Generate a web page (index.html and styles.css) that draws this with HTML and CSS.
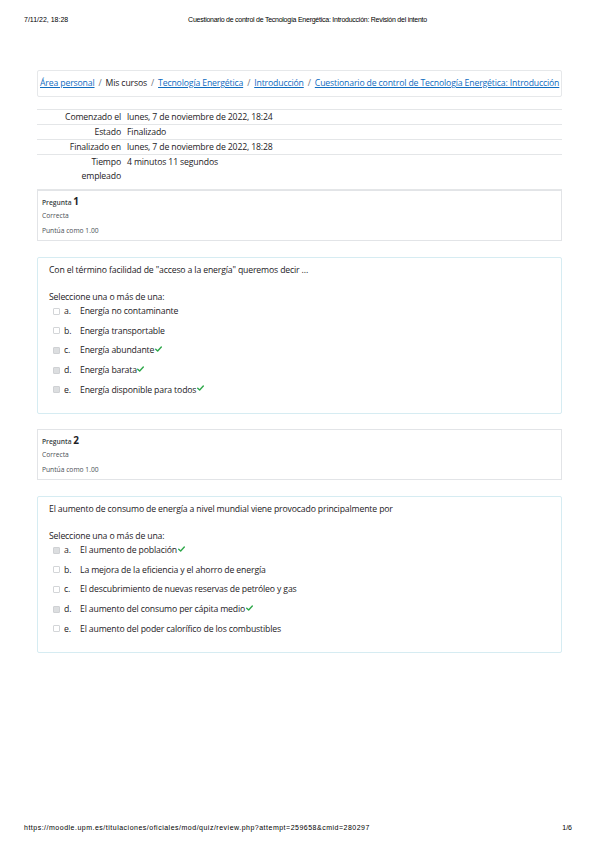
FILE: index.html
```html
<!DOCTYPE html>
<html lang="es">
<head>
<meta charset="utf-8">
<title>Revisión del intento</title>
<link rel="stylesheet" href="styles.css">
</head>
<body>
<header class="print-head">
  <span class="ph-date">7/11/22, 18:28</span>
  <span class="ph-title">Cuestionario de control de Tecnología Energética: Introducción: Revisión del intento</span>
  <span></span>
</header>

<main class="page">
  <nav class="crumbs">
    <a href="#">Área personal</a><span class="sep">/</span><span class="plain">Mis cursos</span><span class="sep">/</span><a href="#">Tecnología Energética</a><span class="sep">/</span><a href="#">Introducción</a><span class="sep">/</span><a href="#">Cuestionario de control de Tecnología Energética: Introducción</a>
  </nav>

  <table class="summary">
    <tr><th>Comenzado el</th><td>lunes, 7 de noviembre de 2022, 18:24</td></tr>
    <tr><th>Estado</th><td>Finalizado</td></tr>
    <tr><th>Finalizado en</th><td>lunes, 7 de noviembre de 2022, 18:28</td></tr>
    <tr class="last"><th>Tiempo<br>empleado</th><td>4 minutos 11 segundos</td></tr>
  </table>

  <section class="qinfo">
    <div class="qno">Pregunta <b>1</b></div>
    <div class="qstate">Correcta</div>
    <div class="qstate">Puntúa como 1.00</div>
  </section>

  <section class="qbody">
    <p class="qtext">Con el término facilidad de "acceso a la energía" queremos decir ...</p>
    <p class="prompt">Seleccione una o más de una:</p>
    <ul class="answers">
      <li><span class="cb"></span><span class="let">a.</span><span>Energía no contaminante</span></li>
      <li><span class="cb"></span><span class="let">b.</span><span>Energía transportable</span></li>
      <li><span class="cb on"></span><span class="let">c.</span><span>Energía abundante</span><svg class="tick" viewBox="0 0 10 8"><path d="M1 4.2 L3.8 6.8 L9 1.2" /></svg></li>
      <li><span class="cb on"></span><span class="let">d.</span><span>Energía barata</span><svg class="tick" viewBox="0 0 10 8"><path d="M1 4.2 L3.8 6.8 L9 1.2" /></svg></li>
      <li><span class="cb on"></span><span class="let">e.</span><span>Energía disponible para todos</span><svg class="tick" viewBox="0 0 10 8"><path d="M1 4.2 L3.8 6.8 L9 1.2" /></svg></li>
    </ul>
  </section>

  <section class="qinfo">
    <div class="qno">Pregunta <b>2</b></div>
    <div class="qstate">Correcta</div>
    <div class="qstate">Puntúa como 1.00</div>
  </section>

  <section class="qbody">
    <p class="qtext">El aumento de consumo de energía a nivel mundial viene provocado principalmente por</p>
    <p class="prompt">Seleccione una o más de una:</p>
    <ul class="answers">
      <li><span class="cb on"></span><span class="let">a.</span><span>El aumento de población</span><svg class="tick" viewBox="0 0 10 8"><path d="M1 4.2 L3.8 6.8 L9 1.2" /></svg></li>
      <li><span class="cb"></span><span class="let">b.</span><span>La mejora de la eficiencia y el ahorro de energía</span></li>
      <li><span class="cb"></span><span class="let">c.</span><span>El descubrimiento de nuevas reservas de petróleo y gas</span></li>
      <li><span class="cb on"></span><span class="let">d.</span><span>El aumento del consumo per cápita medio</span><svg class="tick" viewBox="0 0 10 8"><path d="M1 4.2 L3.8 6.8 L9 1.2" /></svg></li>
      <li><span class="cb"></span><span class="let">e.</span><span>El aumento del poder calorífico de los combustibles</span></li>
    </ul>
  </section>
</main>

<footer class="print-foot">
  <span class="url">https://moodle.upm.es/titulaciones/oficiales/mod/quiz/review.php?attempt=259658&amp;cmid=280297</span>
  <span>1/6</span>
</footer>
</body>
</html>
```

FILE: styles.css
```css
html, body {
  margin: 0;
  padding: 0;
  background: #fff;
}
body {
  width: 599px;
  min-height: 848px;
  display: flex;
  flex-direction: column;
  font-family: "Open Sans", "Noto Sans", sans-serif;
  color: #1d2125;
}
.print-head {
  display: grid;
  grid-template-columns: 1fr auto 1fr;
  align-items: center;
  padding: 14px 24px 0 24px;
  height: 11px;
  font-family: "Liberation Sans", Arial, sans-serif;
  font-size: 7px;
  color: #000;
}
.ph-title {
  letter-spacing: -0.25px;
  margin-left: 16px;
}
.page {
  margin: 45px 37px 0 37px;
  display: flex;
  flex-direction: column;
}
.crumbs {
  border: 1px solid #e6e8ea;
  border-radius: 2px;
  height: 24px;
  display: flex;
  align-items: center;
  padding: 0 0 1px 2px;
  font-size: 8.7px;
  letter-spacing: -0.15px;
  white-space: nowrap;
}
.crumbs a {
  color: #0f6cbf;
  text-decoration: underline;
}
.crumbs .plain {
  color: #1d2125;
}
.crumbs .sep {
  color: #6a737b;
  padding: 0 4px;
}
.summary {
  margin-top: 12px;
  width: 100%;
  border-collapse: collapse;
  font-size: 8.7px;
  letter-spacing: -0.15px;
}
.summary tr {
  border-top: 1px solid #e4e6e8;
}
.summary th,
.summary td {
  padding: 0;
  line-height: 14px;
  vertical-align: top;
  font-weight: normal;
}
.summary th {
  width: 84px;
  text-align: right;
  padding-right: 6px;
}
.summary tr.last {
  border-bottom: 1px solid #e4e6e8;
}
.summary tr.last th,
.summary tr.last td {
  padding-bottom: 6px;
}
.qinfo {
  border: 1px solid #e2e4e7;
  padding: 5px 0 0 4px;
  box-sizing: border-box;
  height: 51px;
  font-size: 6.7px;
  color: #4a4f55;
}
.qno {
  line-height: 11px;
  font-weight: 600;
  color: #3a3f44;
}
.qno b {
  font-size: 10px;
  color: #1d2125;
  font-weight: 700;
}
.qstate {
  line-height: 15px;
}
.qbody {
  margin-top: 16px;
  margin-bottom: 15px;
  border: 1px solid #d6ecf2;
  border-radius: 2px;
  padding: 5px 11px 0 11px;
  height: 157px;
  box-sizing: border-box;
  font-size: 8.7px;
  letter-spacing: -0.15px;
}
.qtext {
  margin: 0;
  line-height: 14px;
}
.prompt {
  margin: 13px 0 0 0;
  line-height: 14px;
}
.answers {
  list-style: none;
  margin: 0;
  padding: 0 0 0 4px;
}
.answers li {
  display: flex;
  align-items: center;
  height: 14px;
  margin-top: 5.7px;
}
.answers li:first-child {
  margin-top: 0;
}
.cb {
  width: 5px;
  height: 5px;
  border: 1px solid #d3d5d8;
  border-radius: 1px;
  background: #fff;
  margin-right: 4px;
}
.cb.on {
  background: #dcdee0;
  border-color: #cfd1d4;
}
.let {
  width: 16px;
}
.tick {
  width: 7px;
  height: 6px;
  margin-left: 0.5px;
  margin-top: -3px;
}
.tick path {
  fill: none;
  stroke: #2ea84a;
  stroke-width: 2;
  stroke-linecap: round;
  stroke-linejoin: round;
}
.print-foot {
  margin-top: auto;
  display: flex;
  justify-content: space-between;
  align-items: center;
  padding: 0 27px 16px 24px;
  height: 9px;
  font-family: "Liberation Sans", Arial, sans-serif;
  font-size: 7px;
  color: #000;
}
.print-foot .url {
  letter-spacing: 0.5px;
}
```
